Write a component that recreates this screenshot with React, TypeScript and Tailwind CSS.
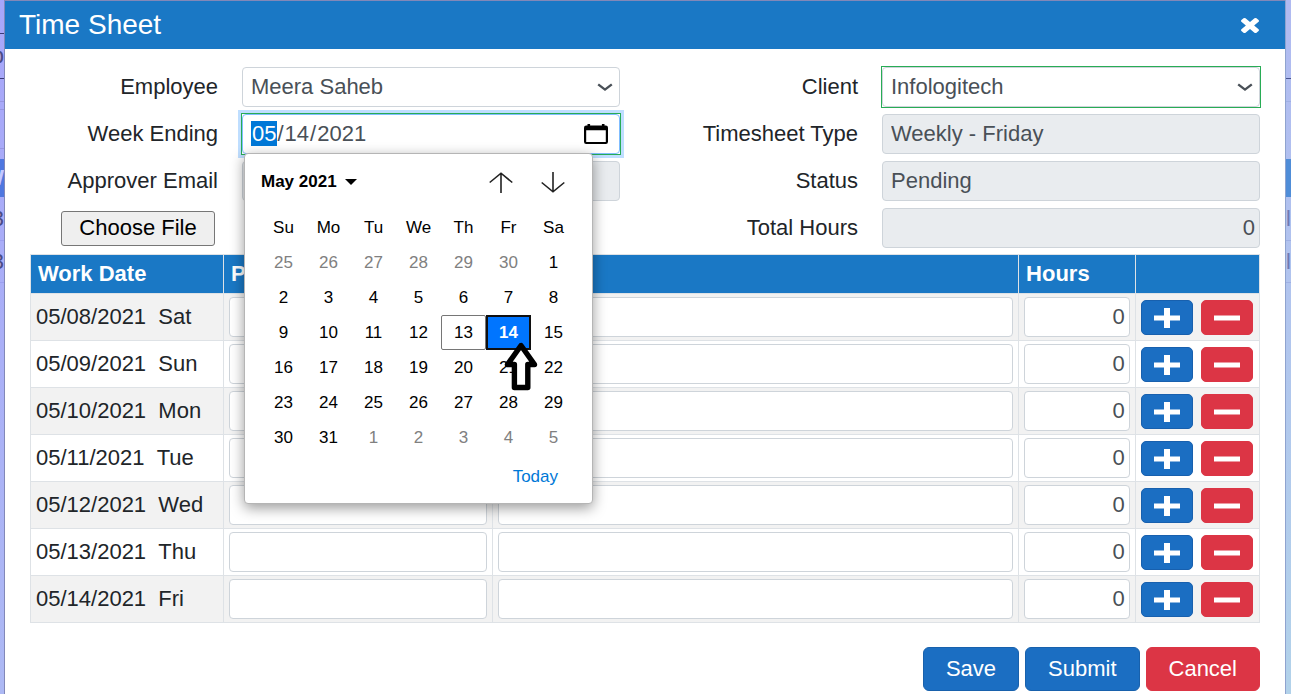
import { useState } from "react";
import type { ReactNode } from "react";

const DAYS = [
  ["05/08/2021", "Sat"],
  ["05/09/2021", "Sun"],
  ["05/10/2021", "Mon"],
  ["05/11/2021", "Tue"],
  ["05/12/2021", "Wed"],
  ["05/13/2021", "Thu"],
  ["05/14/2021", "Fri"],
];

const WEEKDAYS = ["Su", "Mo", "Tu", "We", "Th", "Fr", "Sa"];

const WEEKS = [
  [25, 26, 27, 28, 29, 30, 1],
  [2, 3, 4, 5, 6, 7, 8],
  [9, 10, 11, 12, 13, 14, 15],
  [16, 17, 18, 19, 20, 21, 22],
  [23, 24, 25, 26, 27, 28, 29],
  [30, 31, 1, 2, 3, 4, 5],
];

const FIELD =
  "block h-10 w-full min-w-0 appearance-none rounded border border-[#ced4da] bg-white px-2 text-[#495057] outline-none";
const FIELD_OFF =
  "block h-10 w-full min-w-0 rounded border border-[#ced4da] bg-[#e9ecef] px-2 text-[#495057] outline-none";
const LABEL = "text-right whitespace-nowrap";
const FOOT_BTN = "h-11 rounded-md border px-[22px] text-white";

function Chevron() {
  return (
    <svg
      className="pointer-events-none absolute top-4 right-[7px] h-[9px] w-4"
      viewBox="0 0 16 9"
      fill="none"
      stroke="#495057"
      strokeWidth="2.4"
    >
      <path d="M1.2 1.4 8 6.600l6.800-5.200" />
    </svg>
  );
}

function SelectField({ id, value, valid }: { id: string; value: string; valid?: boolean }) {
  return (
    <div className={valid ? "relative outline outline-1 outline-[#28ac55]" : "relative"}>
      <select id={id} className={FIELD} defaultValue={value}>
        <option>{value}</option>
      </select>
      <Chevron />
    </div>
  );
}

function CalendarPopup({ selected, onSelect }: { selected: number; onSelect: (d: number) => void }) {
  return (
    <div className="absolute top-[39px] left-0.5 z-10 w-[349px] rounded-sm border border-[#b5b5b5] bg-white px-4 pb-1 text-[17px] text-black shadow-[0_4px_14px_rgba(0,0,0,0.4)]">
      <div className="flex h-14 items-center">
        <button className="flex items-center gap-2 font-bold">
          May 2021
          <svg className="h-[6px] w-3" viewBox="0 0 12 6">
            <path d="M0 0h12L6 6z" />
          </svg>
        </button>
        <button aria-label="Previous month" className="mr-7 ml-auto">
          <svg className="h-[21px] w-6" viewBox="0 0 24 21" fill="none" stroke="#222" strokeWidth="1.6">
            <path d="M12 21V1.2M.7 10.5 12 1.2l11.3 9.3" />
          </svg>
        </button>
        <button aria-label="Next month" className="mr-[11px]">
          <svg className="h-[21px] w-6" viewBox="0 0 24 21" fill="none" stroke="#222" strokeWidth="1.6">
            <path d="M12 0v19.8M.7 10.5 12 19.8l11.3-9.3" />
          </svg>
        </button>
      </div>
      <table className="w-[315px] table-fixed border-collapse text-center">
        <thead>
          <tr className="h-[35px]">
            {WEEKDAYS.map((d) => (
              <th key={d} className="p-0 font-normal">
                {d}
              </th>
            ))}
          </tr>
        </thead>
        <tbody>
          {WEEKS.map((week, w) => (
            <tr key={w}>
              {week.map((d, i) => {
                const outside = (w === 0 && d > 20) || (w === 5 && d < 10);
                let look = "border border-transparent";
                if (outside) look = "border border-transparent text-[#808080]";
                else if (d === selected) look = "border-2 border-[#101010] bg-[#0075ff] font-bold text-white";
                else if (d === 13) look = "rounded-xs border border-[#767676]";
                return (
                  <td key={i} className="p-0">
                    <button
                      className={"block h-[35px] w-full " + look}
                      onClick={() => !outside && onSelect(d)}
                    >
                      {d}
                    </button>
                  </td>
                );
              })}
            </tr>
          ))}
        </tbody>
      </table>
      <div className="flex h-11 items-center justify-end pr-[18px]">
        <button className="text-[#0078d7]" onClick={() => onSelect(13)}>
          Today
        </button>
      </div>
      <svg
        className="pointer-events-none absolute top-[187px] left-[259px] h-[50px] w-[34px]"
        viewBox="0 0 34 50"
        fill="#fff"
        stroke="#000"
        strokeWidth="5.4"
        strokeLinejoin="round"
      >
        <path d="M17 4.5 3.500 23.500h6.900v23h13.400v-23H30.500z" />
      </svg>
    </div>
  );
}

function Strip({ side, children }: { side: "left" | "right"; children: ReactNode }) {
  return (
    <div
      aria-hidden="true"
      className={
        side === "left"
          ? "flex w-[5px] shrink-0 flex-col overflow-hidden border-r border-[#8b8fd6] bg-linear-to-b from-[#a7a6fa] to-[#adb9f4] text-[#4b4c86]"
          : "flex w-[6px] shrink-0 flex-col overflow-hidden border-l border-[#8fa3cf] bg-linear-to-b from-[#b0baf1] to-[#b2d2ea] text-[#6f79b4]"
      }
    >
      {children}
    </div>
  );
}

export default function App() {
  const [day, setDay] = useState(14);
  const iso = "2021-05-" + String(day).padStart(2, "0");

  return (
    <div className="flex h-screen overflow-hidden bg-white pr-[9px] font-['Liberation_Sans',Arial,sans-serif] text-[22px] leading-7 text-[#212529]">
      <Strip side="left">
        <div className="h-[34px] shrink-0 border-b border-[#3a3a78]" />
        <div className="flex h-[45px] shrink-0 items-center justify-end border-b border-[#3a3a78]">p</div>
        <div className="h-[23px] shrink-0 border-b border-[#9796e2]" />
        <div className="h-2 shrink-0 border-b border-[#9796e2]" />
        <div className="h-[39px] shrink-0 border-b border-[#9796e2]" />
        <div className="mt-2.5 flex h-[38px] shrink-0 items-center justify-end bg-[#4f77e0] font-bold text-[#c3c9ff]">W</div>
        <div className="flex h-11 shrink-0 items-center justify-end border-b border-[#9c9ff0]">3</div>
        <div className="flex h-[42px] shrink-0 items-center justify-end border-b border-[#9c9ff0]">3</div>
      </Strip>

      <main className="mt-px flex min-w-0 flex-1 flex-col bg-white outline outline-1 outline-[#8288b8]">
        <header className="flex h-12 shrink-0 items-center justify-between bg-[#1a78c5] pr-[26px] pl-3.5 text-white">
          <h1 className="text-[28px]">Time Sheet</h1>
          <button aria-label="Close">
            <svg
              className="h-[15px] w-[18px]"
              viewBox="302 366 1188 1188"
              preserveAspectRatio="none"
              fill="currentColor"
            >
              <path d="M1490 1322q0 40-28 68l-136 136q-28 28-68 28t-68-28l-294-294-294 294q-28 28-68 28t-68-28l-136-136q-28-28-28-68t28-68l294-294-294-294q-28-28-28-68t28-68l136-136q28-28 68-28t68 28l294 294 294-294q28-28 68-28t68 28l136 136q28 28 28 68t-28 68l-294 294 294 294q28 28 28 68z" />
            </svg>
          </button>
        </header>

        <div className="px-[25px] pt-[18px]">
          <div className="grid grid-cols-[188fr_378fr_214fr_378fr] items-center gap-x-6 gap-y-[7px]">
            <label htmlFor="employee" className={LABEL}>Employee</label>
            <SelectField id="employee" value="Meera Saheb" />
            <label htmlFor="client" className={LABEL}>Client</label>
            <SelectField id="client" value="Infologitech" valid />

            <label htmlFor="week" className={LABEL}>Week Ending</label>
            <div className="relative shadow-[0_0_0_4px_#bfdeff] outline outline-1 outline-[#28ac55]">
              <input
                id="week"
                type="date"
                value={iso}
                onChange={(e) => setDay(Number(e.target.value.slice(8)) || 14)}
                className="block h-10 w-full rounded border border-[#80bdff] bg-white px-2 text-[#495057] outline-none [&::-webkit-calendar-picker-indicator]:opacity-0 [&::-webkit-datetime-edit-month-field]:bg-[#0078d7] [&::-webkit-datetime-edit-month-field]:text-white"
              />
              <svg
                className="pointer-events-none absolute top-2.5 right-3 h-5 w-6"
                viewBox="0 0 24 20"
                fill="#000"
              >
                <path
                  fillRule="evenodd"
                  d="M3.5 0h2.6v1.6h11.8V0h2.6v1.6h1.3A2.2 2.2 0 0 1 24 3.8v13.9a2.2 2.2 0 0 1-2.2 2.2H2.2A2.2 2.2 0 0 1 0 17.700V3.800a2.200 2.200 0 0 1 2.200-2.200h1.300zM2.200 6.300v11.700h19.600V6.300z"
                />
              </svg>
              <CalendarPopup selected={day} onSelect={setDay} />
            </div>
            <label htmlFor="type" className={LABEL}>Timesheet Type</label>
            <input id="type" className={FIELD_OFF} value="Weekly - Friday" readOnly />

            <label htmlFor="approver" className={LABEL}>Approver Email</label>
            <input id="approver" className={FIELD_OFF} readOnly />
            <label htmlFor="status" className={LABEL}>Status</label>
            <input id="status" className={FIELD_OFF} value="Pending" readOnly />

            <input
              type="file"
              aria-label="Choose File"
              className="mr-[3px] w-[154px] justify-self-end overflow-hidden text-transparent file:h-[35px] file:w-[154px] file:rounded-[3px] file:border file:border-solid file:border-[#767676] file:bg-[#efefef] file:text-center file:text-black"
            />
            <div />
            <label htmlFor="total" className={LABEL}>Total Hours</label>
            <input id="total" className={FIELD_OFF + " pr-1 text-right"} value="0" readOnly />
          </div>

          <table className="mt-1.5 w-full table-fixed border-collapse">
            <colgroup>
              <col className="w-[15.7%]" />
              <col className="w-[21.9%]" />
              <col className="w-[42.8%]" />
              <col className="w-[9.5%]" />
              <col className="w-[10.1%]" />
            </colgroup>
            <thead>
              <tr className="h-[39px] bg-[#1a78c5] text-left text-white">
                <th className="border border-[#dee2e6] px-[7px] py-0">Work Date</th>
                <th className="border border-[#dee2e6] px-[7px] py-0">Project</th>
                <th className="border border-[#dee2e6] px-[7px] py-0" />
                <th className="border border-[#dee2e6] px-[7px] py-0">Hours</th>
                <th className="border border-[#dee2e6] px-[7px] py-0" />
              </tr>
            </thead>
            <tbody>
              {DAYS.map(([date, name]) => (
                <tr key={date} className="h-[47px] odd:bg-[#f2f2f2]">
                  <td className="border border-[#dee2e6] px-[5px] py-0 whitespace-nowrap">
                    {date} &nbsp;{name}
                  </td>
                  <td className="border border-[#dee2e6] px-[5px] py-[3px]">
                    <input aria-label={"Project " + date} className={FIELD} />
                  </td>
                  <td className="border border-[#dee2e6] px-[5px] py-[3px]">
                    <input aria-label={"Task " + date} className={FIELD} />
                  </td>
                  <td className="border border-[#dee2e6] px-[5px] py-[3px]">
                    <input aria-label={"Hours " + date} className={FIELD + " pr-1 text-right"} defaultValue="0" />
                  </td>
                  <td className="border border-[#dee2e6] px-[5px] py-[3px]">
                    <div className="flex gap-2">
                      <button
                        aria-label="Add row"
                        className="flex h-[35px] w-[52px] items-center justify-center rounded-[5px] border border-[#1860ae] bg-[#1b6ec2]"
                      >
                        <svg className="mt-0.5 h-5 w-[26px]" viewBox="0 0 26 20" fill="#fff">
                          <path d="M10 0h6v7.500h10v5H16V20h-6v-7.500H0v-5h10z" />
                        </svg>
                      </button>
                      <button
                        aria-label="Remove row"
                        className="flex h-[35px] w-[52px] items-center justify-center rounded-[5px] border border-[#dc3545] bg-[#dc3545]"
                      >
                        <svg className="mt-0.5 h-5 w-[26px]" viewBox="0 0 26 20" fill="#fff">
                          <path d="M0 7.500h26v5H0z" />
                        </svg>
                      </button>
                    </div>
                  </td>
                </tr>
              ))}
            </tbody>
          </table>

          <footer className="mt-6 flex justify-end gap-1.5">
            <button className={FOOT_BTN + " border-[#1861ac] bg-[#1b6ec2]"}>Save</button>
            <button className={FOOT_BTN + " border-[#1861ac] bg-[#1b6ec2]"}>Submit</button>
            <button className={FOOT_BTN + " border-[#dc3545] bg-[#dc3545]"}>Cancel</button>
          </footer>
        </div>
      </main>

      <Strip side="right">
        <div className="h-[79px] shrink-0 border-b border-[#4a5590]" />
        <div className="h-[23px] shrink-0 border-b border-[#9fb0e4]" />
        <div className="mt-[57px] h-[38px] shrink-0 bg-[#4f8dd8]" />
        <div className="flex h-11 shrink-0 items-center border-b border-[#9fb0e4]">l</div>
        <div className="flex h-[42px] shrink-0 items-center border-b border-[#9fb0e4]">l</div>
      </Strip>
    </div>
  );
}
